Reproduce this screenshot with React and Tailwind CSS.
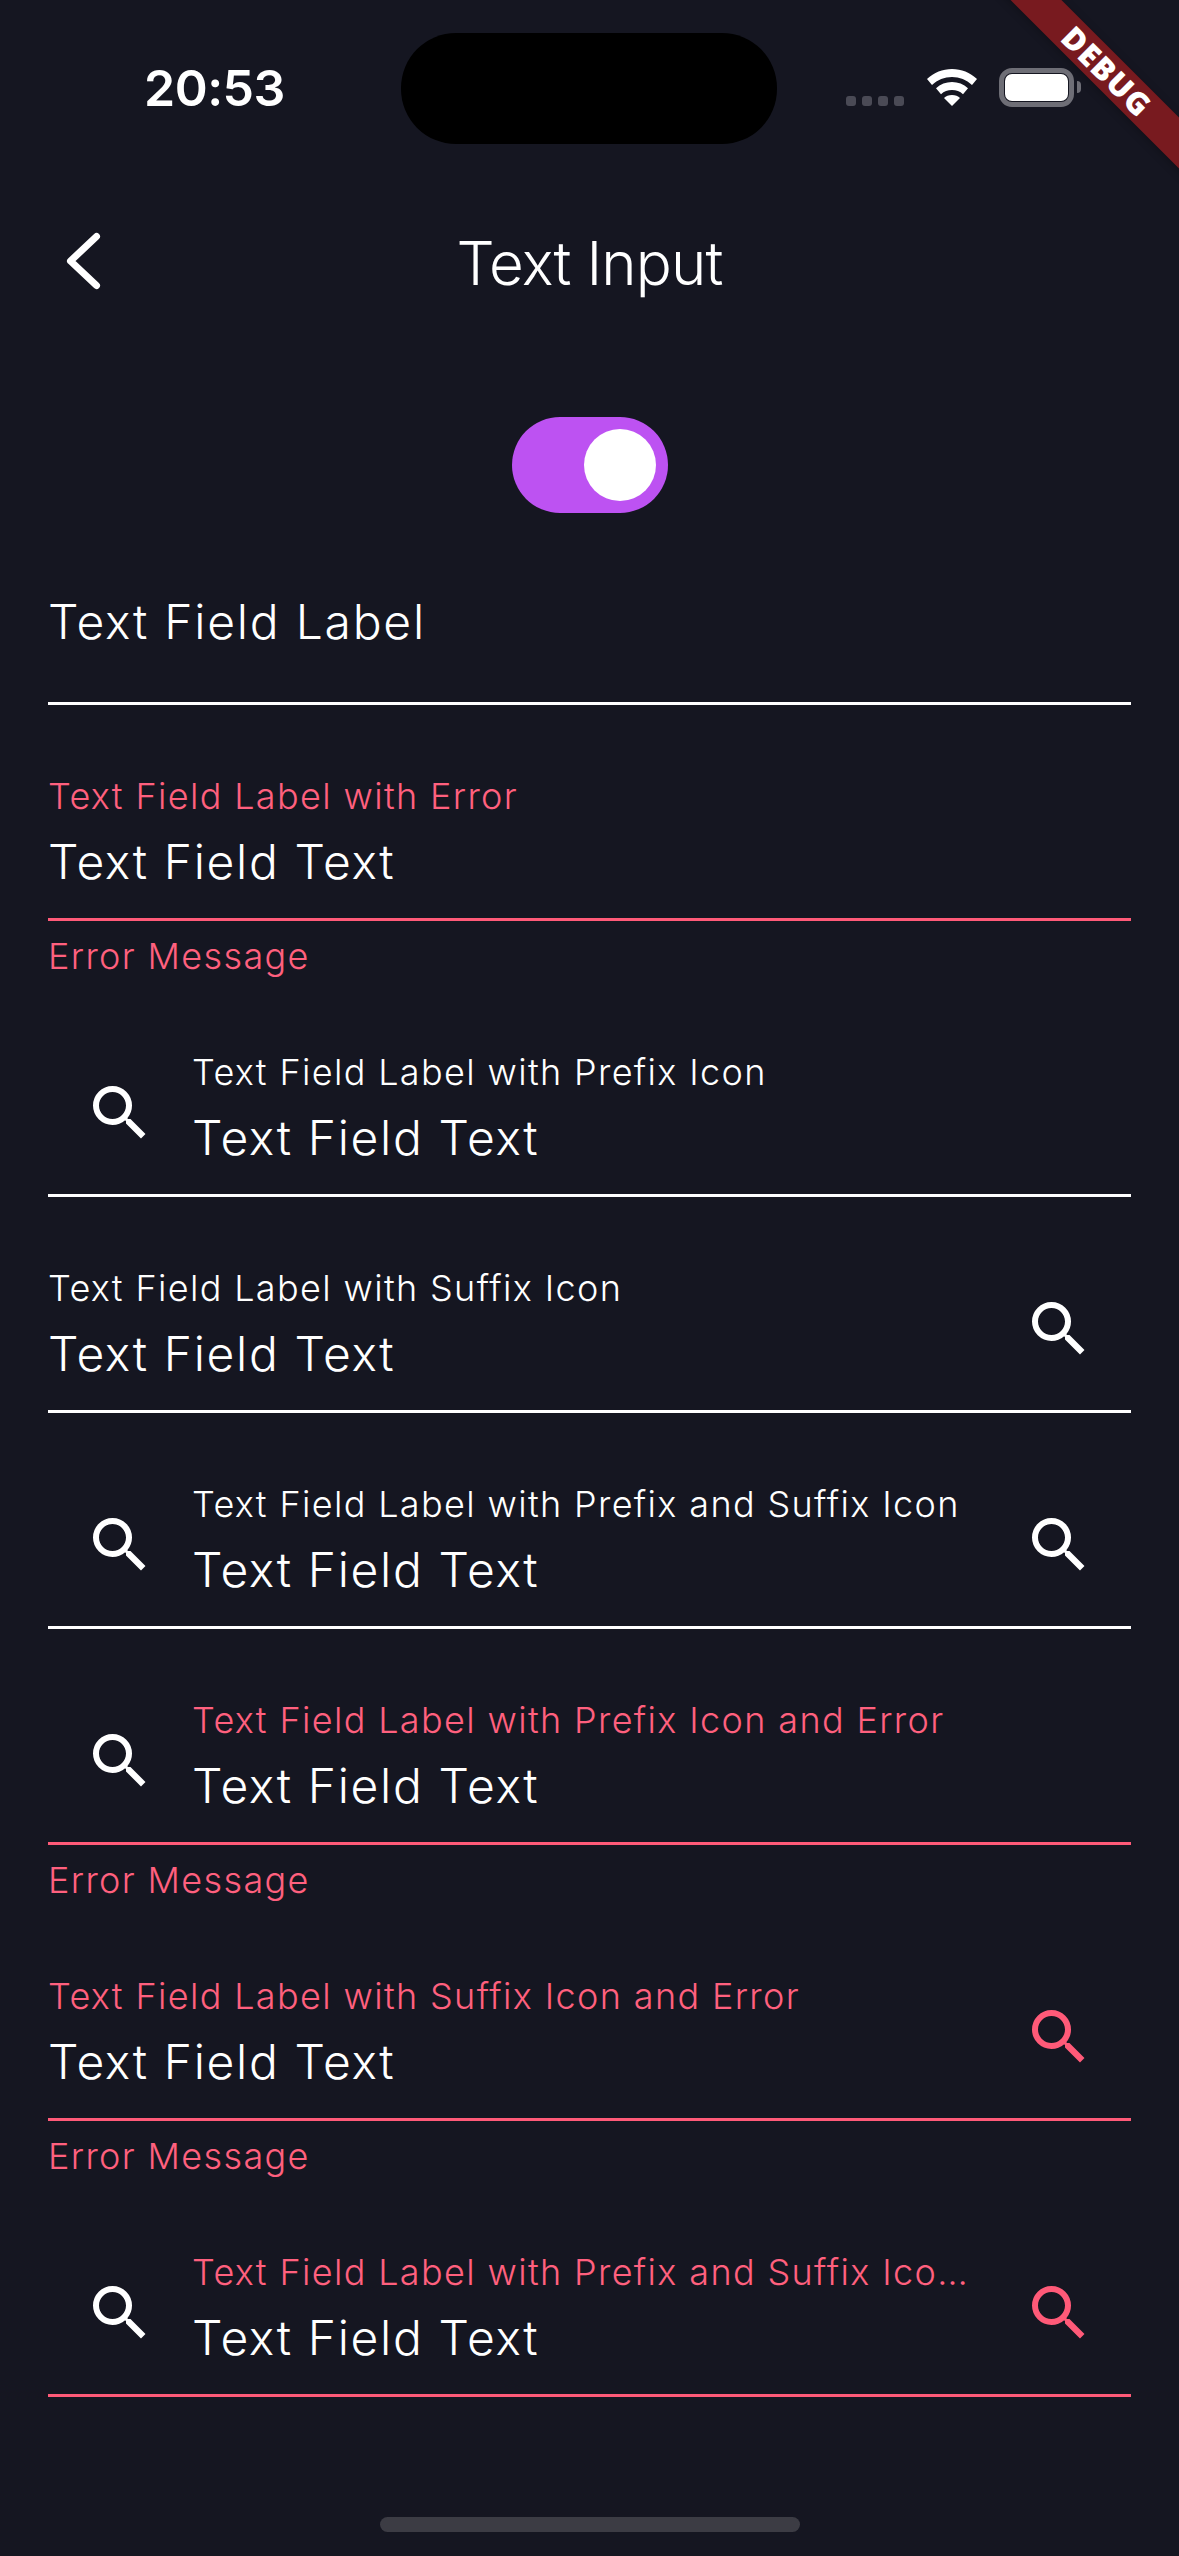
import { MdSearch } from 'react-icons/md';

function SearchIcon({ error }) {
  return <MdSearch className={`w-[72px] h-[72px] ${error ? 'text-[#ff5a78]' : 'text-white'}`} />;
}

function Field({ label, value, error, prefix, suffix, message }) {
  const tone = error ? 'text-[#ff607e]' : 'text-white';
  return (
    <div>
      <div className={`flex h-[216px] border-b-[3px] ${error ? 'border-[#ff5a78]' : 'border-white'}`}>
        {prefix && (
          <div className="w-[144px] shrink-0 pt-[96px] flex justify-center">
            <SearchIcon />
          </div>
        )}
        <div className="flex-1 min-w-0 pt-[69px]">
          <div className={`text-[36px] leading-[44px] font-[350] tracking-[1.35px] truncate ${tone}`}>{label}</div>
          <div className="mt-[15px] text-[48px] leading-[58px] font-[350] tracking-[1.65px] text-white">{value}</div>
        </div>
        {suffix && (
          <div className="w-[144px] shrink-0 pt-[96px] flex justify-center">
            <SearchIcon error={error} />
          </div>
        )}
      </div>
      {message && (
        <div className="h-[60px] pt-[13px] text-[36px] leading-[44px] font-[350] tracking-[1.35px] text-[#ff607e]">{message}</div>
      )}
    </div>
  );
}

function StatusBar() {
  return (
    <div className="flex h-[144px] pt-[33px] pl-[144px]">
      <div className="w-[257px] h-[110px] flex items-center text-[50px] font-semibold text-white tracking-[-0.5px]">20:53</div>
      <div className="w-[376px] h-[111px] rounded-[55px] bg-black" />
      <div className="flex pl-[69px] pt-[35px] items-start">
        <div className="flex gap-[6px] mt-[28px]">
          <div className="w-[10px] h-[10px] rounded-[3px] bg-[#4a4a55]" />
          <div className="w-[10px] h-[10px] rounded-[3px] bg-[#4a4a55]" />
          <div className="w-[10px] h-[10px] rounded-[3px] bg-[#4a4a55]" />
          <div className="w-[10px] h-[10px] rounded-[3px] bg-[#4a4a55]" />
        </div>
        <svg className="ml-[23px] mt-[1px]" width="50" height="37" viewBox="0 0 50 37">
          <path d="M25 0C15.500 0 7 3.600 0 10l5 6C10.500 10.900 17.500 8 25 8s14.500 2.900 20 8l5-6C43 3.600 34.500 0 25 0z" fill="#fff" />
          <path d="M25 13c-6 0-11.600 2.200-16 6.200l5 6C17 22.400 20.800 21 25 21s8 1.400 11 4.200l5-6C36.600 15.200 31 13 25 13z" fill="#fff" />
          <path d="M25 26c-3.200 0-6.200 1.100-8 3l8 8 8-8c-1.800-1.900-4.800-3-8-3z" fill="#fff" />
        </svg>
        <div className="ml-[22px] w-[75px] h-[39px] rounded-[13px] border-[5px] border-[#6e6e76] p-[1px]">
          <div className="w-full h-full rounded-[7px] bg-white" />
        </div>
        <div className="ml-[3px] mt-[13px] w-[4px] h-[12px] rounded-r-[4px] bg-[#6e6e76]" />
      </div>
    </div>
  );
}

function DebugBanner() {
  return (
    <div className="absolute top-0 right-0 w-[200px] h-[200px] overflow-hidden">
      <div className="absolute left-[-52px] top-[53px] w-[360px] h-[36px] rotate-45 bg-[#781a1f] shadow-[0_2px_8px_rgba(0,0,0,0.25)] flex items-center justify-center text-[31px] font-black text-white tracking-[1px] font-['Open_Sans',sans-serif]">
        DEBUG
      </div>
    </div>
  );
}

export default function App() {
  return (
    <div className="relative w-[1179px] h-[2556px] overflow-hidden bg-[#151621] font-['Inter',sans-serif]">
      <StatusBar />
      <DebugBanner />

      <div className="grid grid-cols-[1fr_auto_1fr] items-center h-[110px] px-[48px] mt-[62px]">
        <svg className="ml-[18px]" width="36" height="60" viewBox="0 0 36 60" fill="none">
          <path d="M30.5 5.500 L4.500 30 L30.500 54.500" stroke="#fff" strokeWidth="7" strokeLinecap="round" strokeLinejoin="round" />
        </svg>
        <div className="mt-[3px] text-[60px] font-light text-white tracking-[-0.9px]">Text Input</div>
        <div />
      </div>

      <div className="flex justify-center mt-[101px]">
        <div className="w-[156px] h-[96px] rounded-full bg-[#bd52f2] flex justify-end items-center pr-[12px]">
          <div className="w-[72px] h-[72px] rounded-full bg-white" />
        </div>
      </div>

      <div className="px-[48px]">
        <div className="flex items-center h-[192px] border-b-[3px] border-white text-[48px] font-[350] tracking-[1.75px] text-white pt-[29px]">
          Text Field Label
        </div>
        <Field label="Text Field Label with Error" value="Text Field Text" error message="Error Message" />
        <Field label="Text Field Label with Prefix Icon" value="Text Field Text" prefix />
        <Field label="Text Field Label with Suffix Icon" value="Text Field Text" suffix />
        <Field label="Text Field Label with Prefix and Suffix Icon" value="Text Field Text" prefix suffix />
        <Field label="Text Field Label with Prefix Icon and Error" value="Text Field Text" prefix error message="Error Message" />
        <Field label="Text Field Label with Suffix Icon and Error" value="Text Field Text" suffix error message="Error Message" />
        <Field label="Text Field Label with Prefix and Suffix Icon and Error" value="Text Field Text" prefix suffix error />
      </div>

      <div className="absolute bottom-[24px] left-[380px] w-[420px] h-[15px] rounded-full bg-[#3c3c44]" />
    </div>
  );
}
